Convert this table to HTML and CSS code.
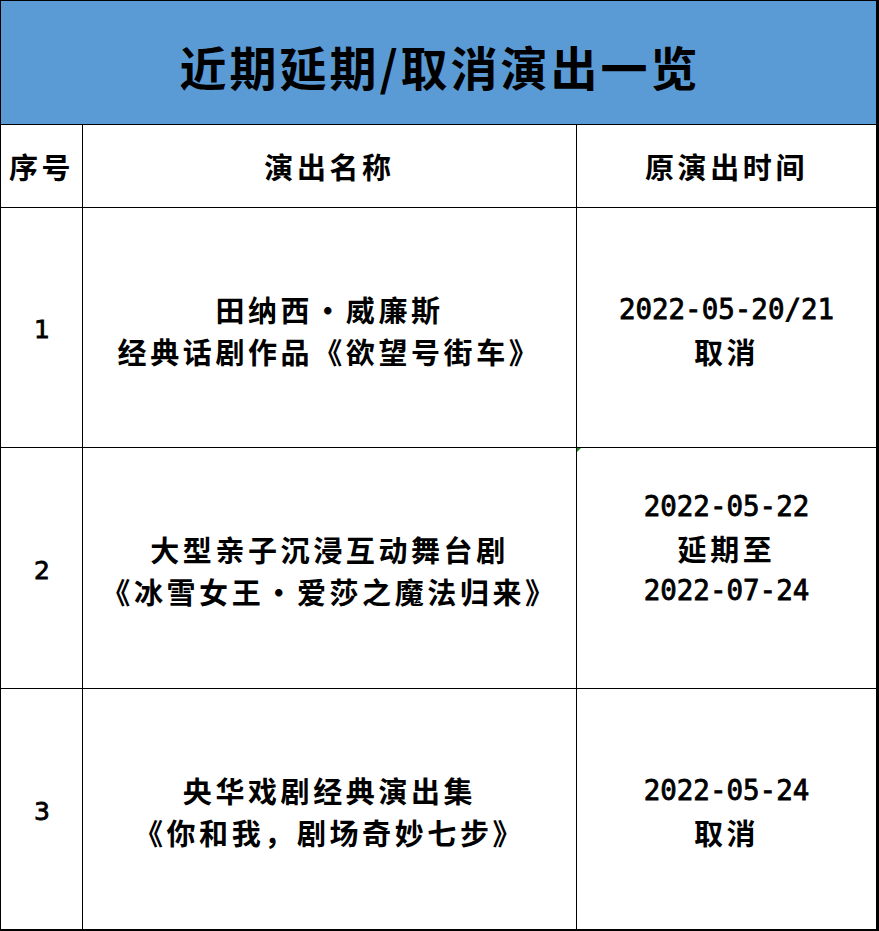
FILE: index.html
```html
<!DOCTYPE html>
<html lang="zh-CN">
<head>
<meta charset="utf-8">
<title>近期延期/取消演出一览</title>
<link rel="stylesheet" href="styles.css">
</head>
<body>
<div class="sheet">
  <div class="title">近期延期/取消演出一览</div>
  <div class="grid">
    <div class="cell head">序号</div>
    <div class="cell head">演出名称</div>
    <div class="cell head">原演出时间</div>

    <div class="cell num">1</div>
    <div class="cell"><div>田纳西・威廉斯</div><div>经典话剧作品《欲望号街车》</div></div>
    <div class="cell date"><div class="mono">2022-05-20/21</div><div>取消</div><span class="mark"></span></div>

    <div class="cell num">2</div>
    <div class="cell"><div>大型亲子沉浸互动舞台剧</div><div>《冰雪女王・爱莎之魔法归来》</div></div>
    <div class="cell date raised"><div class="mono">2022-05-22</div><div>延期至</div><div class="mono">2022-07-24</div></div>

    <div class="cell num">3</div>
    <div class="cell"><div>央华戏剧经典演出集</div><div>《你和我，剧场奇妙七步》</div></div>
    <div class="cell date"><div class="mono">2022-05-24</div><div>取消</div></div>
  </div>
</div>
</body>
</html>
```
FILE: styles.css
```css
html, body {
  margin: 0;
  padding: 0;
  background: #ffffff;
}
.sheet {
  width: 879px;
  height: 931px;
  box-sizing: border-box;
  border-style: solid;
  border-color: #000;
  border-width: 1px 3px 2px 1px;
  display: flex;
  flex-direction: column;
  font-family: "Noto Sans CJK SC", "Noto Sans", sans-serif;
  font-weight: bold;
  color: #000;
  background: #000;
}
.title {
  height: 124px;
  box-sizing: border-box;
  background: #5b9bd5;
  border-bottom: 1px solid #000;
  display: flex;
  align-items: center;
  justify-content: center;
  font-size: 47px;
  letter-spacing: 3px;
  padding-top: 6px;
  padding-left: 3px;
}
.grid {
  display: grid;
  grid-template-columns: 81px 493px 299px;
  grid-template-rows: 82px 239px 240px 240px;
  column-gap: 1px;
  row-gap: 1px;
  background: #000;
}
.cell {
  background: #fff;
  display: flex;
  flex-direction: column;
  align-items: center;
  justify-content: center;
  font-size: 29px;
  letter-spacing: 3.6px;
  text-align: center;
  position: relative;
  padding-top: 4px;
  box-sizing: border-box;
}
.cell > div {
  height: 42px;
  line-height: 42px;
  white-space: nowrap;
}
.head {
  padding-top: 0;
  line-height: 42px;
}
.num {
  font-family: "DejaVu Sans", sans-serif;
  font-weight: normal;
  -webkit-text-stroke: 0.8px #000;
  font-size: 25px;
  letter-spacing: 0;
  padding-left: 1px;
}
.mono {
  font-family: "DejaVu Sans Mono", monospace;
  font-weight: normal;
  -webkit-text-stroke: 0.8px #000;
  font-size: 27.5px;
  letter-spacing: 0;
}
.raised {
  padding-top: 0;
  padding-bottom: 40px;
}
.mark {
  position: absolute;
  left: 0;
  bottom: -5px;
  width: 0;
  height: 0;
  border-top: 4px solid #1a8a1a;
  border-right: 4px solid transparent;
  z-index: 2;
}
```
